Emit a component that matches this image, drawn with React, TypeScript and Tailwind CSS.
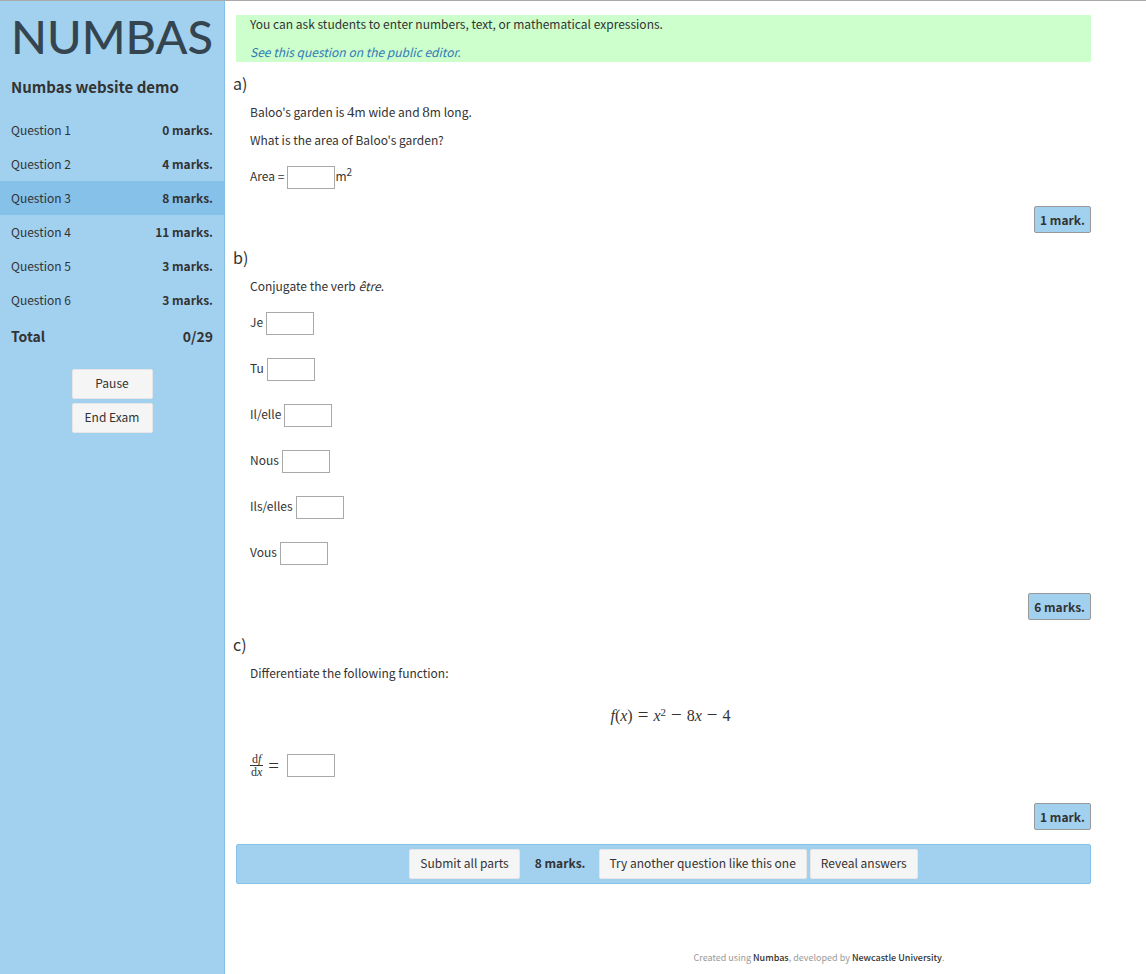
import type { ReactNode } from "react";

const questions = [
  { name: "Question 1", marks: "0 marks." },
  { name: "Question 2", marks: "4 marks." },
  { name: "Question 3", marks: "8 marks.", current: true },
  { name: "Question 4", marks: "11 marks." },
  { name: "Question 5", marks: "3 marks." },
  { name: "Question 6", marks: "3 marks." },
];

const pronouns = ["Je", "Tu", "Il/elle", "Nous", "Ils/elles", "Vous"];

function Button({ children }: { children: ReactNode }) {
  return (
    <button type="button" className="h-[30px] rounded-[2px] border border-[#e6e6e6] bg-[#f5f5f5] px-[10px] pb-[2px] leading-[18px]">
      {children}
    </button>
  );
}

function Gap({ id }: { id: string }) {
  return <input id={id} type="text" className="h-[23px] w-12 border border-[#a9a9a9] bg-white px-1 outline-none" />;
}

function Op({ children }: { children: ReactNode }) {
  return <span className="mx-[5px] text-[19px] leading-none">{children}</span>;
}

function Part({ label, marks, children }: { label: string; marks: string; children: ReactNode }) {
  return (
    <section className="mt-3 first-of-type:mt-[9px]">
      <h2 className="-ml-[3px] text-[16px] leading-6">{label}</h2>
      <div className="mt-2 pl-[14px]">{children}</div>
      <div className="flex justify-end">
        <strong className="h-[27px] rounded-[2px] border border-[#999] bg-[#a2d1f0] px-[5px] leading-[26px]">{marks}</strong>
      </div>
    </section>
  );
}

export default function App() {
  return (
    <div className="flex min-h-screen border-t border-[#a9a9a9] bg-white font-['Noto_Sans_CJK_SC',sans-serif] text-[12px] leading-[18px] text-[#333]">
      <nav className="w-[225px] shrink-0 border-r border-[#85c1e9] bg-[#a2d1f0]">
        <div className="px-[11px] pt-[5px] font-['Lato',sans-serif] text-[47px] leading-[60px] font-medium text-[#34454f]">NUMBAS</div>
        <h1 className="mt-[9px] px-[11px] text-[15px] font-bold leading-6">Numbas website demo</h1>
        <ul className="mt-[14px]">
          {questions.map((q) => (
            <li key={q.name} className={q.current ? "bg-[#85c1e9]" : ""}>
              <a href="#" className="flex h-[34px] items-center justify-between px-[11px]">
                <span>{q.name}</span>
                <strong>{q.marks}</strong>
              </a>
            </li>
          ))}
        </ul>
        <div className="mt-[7px] flex justify-between px-[11px] text-[14px] font-bold leading-6">
          <span>Total</span>
          <span>0/29</span>
        </div>
        <div className="mx-auto mt-[21px] flex w-[81px] flex-col gap-1">
          <Button>Pause</Button>
          <Button>End Exam</Button>
        </div>
      </nav>

      <div className="flex min-w-0 flex-1 flex-col">
        <main className="mr-[55px] ml-[11px] pt-[14px]">
          <div className="flex flex-col gap-[10px] bg-[#ccffcc] pb-px pl-[14px]">
            <p>You can ask students to enter numbers, text, or mathematical expressions.</p>
            <p>
              <a href="#" className="italic text-[#337ab7]">See this question on the public editor.</a>
            </p>
          </div>

          <Part label="a)" marks="1 mark.">
            <p>
              Baloo's garden is <span className="font-['Liberation_Serif',serif] text-[15px] leading-none">4</span>m wide and{" "}
              <span className="font-['Liberation_Serif',serif] text-[15px] leading-none">8</span>m long.
            </p>
            <p className="mt-[10px]">What is the area of Baloo's garden?</p>
            <div className="mt-[17px] mb-[17px] flex items-center">
              <label htmlFor="area" className="mr-[3px] pb-1">Area =</label>
              <Gap id="area" />
              <span className="pb-1">
                m<sup className="text-[10px]">2</sup>
              </span>
            </div>
          </Part>

          <Part label="b)" marks="6 marks.">
            <p>
              Conjugate the verb <em>être</em>.
            </p>
            <div className="mt-[17px] mb-7 flex flex-col gap-[23px]">
              {pronouns.map((p) => (
                <div key={p} className="flex items-center gap-[3px]">
                  <label htmlFor={p} className="pb-[3px]">{p}</label>
                  <Gap id={p} />
                </div>
              ))}
            </div>
          </Part>

          <Part label="c)" marks="1 mark.">
            <p>Differentiate the following function:</p>
            <p className="mt-[23px] text-center font-['Liberation_Serif',serif] text-[16px] leading-[18px]">
              <i>f</i>(<i>x</i>)<Op>=</Op><i>x</i>
              <sup className="text-[11px]">2</sup><Op>−</Op>8<i>x</i><Op>−</Op>4
            </p>
            <div className="mt-[28px] mb-[25px] flex items-center">
              <label htmlFor="derivative" className="mr-[3px] flex items-center font-['Liberation_Serif',serif]">
                <span className="flex flex-col text-center text-xs leading-3">
                  <span className="border-b border-[#333] px-[2px]">
                    d<i>f</i>
                  </span>
                  <span>
                    d<i>x</i>
                  </span>
                </span>
                <Op>=</Op>
              </label>
              <Gap id="derivative" />
            </div>
          </Part>

          <div className="mt-[14px] flex min-h-10 items-center justify-center rounded-[2px] border border-[#85c1e9] bg-[#a2d1f0]">
            <Button>Submit all parts</Button>
            <strong className="mr-[13px] ml-[15px] pb-[3px]">8 marks.</strong>
            <div className="flex gap-[3px]">
              <Button>Try another question like this one</Button>
              <Button>Reveal answers</Button>
            </div>
          </div>
        </main>
        <footer className="mt-16 pb-[6px] pl-[267px] text-center text-[9px] leading-5 text-[#999]">
          Created using <a href="#" className="font-medium text-[#333]">Numbas</a>, developed by{" "}
          <a href="#" className="font-medium text-[#333]">Newcastle University</a>.
        </footer>
      </div>
    </div>
  );
}
